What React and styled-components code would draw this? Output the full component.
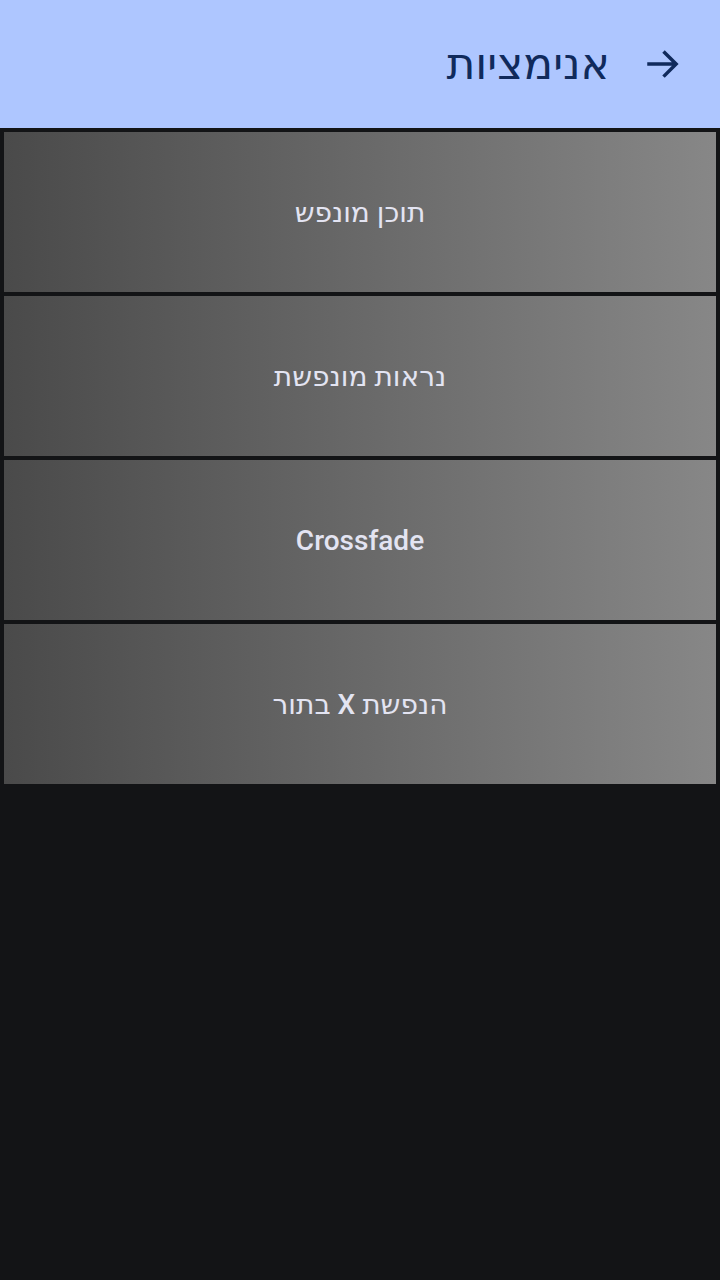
import React from "react";
import styled, { createGlobalStyle } from "styled-components";

const Global = createGlobalStyle`
  html, body { margin: 0; padding: 0; background: #131416; }
  body { font-family: Roboto, "Noto Sans", "DejaVu Sans", sans-serif; }
`;

const Page = styled.div`
  width: 720px;
  min-height: 1280px;
  background: #131416;
  direction: rtl;
`;

const Header = styled.header`
  height: 128px;
  background: #aec6ff;
  display: flex;
  align-items: center;
  padding: 0 36px 0 0;
  box-sizing: border-box;
  gap: 32px;
`;

const BackButton = styled.button`
  background: none;
  border: none;
  padding: 0;
  width: 42px;
  height: 42px;
  display: flex;
  align-items: center;
  justify-content: center;
  color: #102a5c;
  cursor: pointer;
`;

const Title = styled.h1`
  margin: 0;
  font-family: Roboto, "Noto Sans", "DejaVu Sans", sans-serif;
  font-weight: 400;
  font-size: 44px;
  color: #102a5c;
  line-height: 1;
`;

const List = styled.div`
  display: flex;
  flex-direction: column;
  gap: 4px;
  padding: 4px;
`;

const Card = styled.button`
  height: 160px;
  border: none;
  padding: 0;
  background: linear-gradient(to right, #4a4a4a, #878787);
  display: flex;
  align-items: center;
  justify-content: center;
  font-family: Roboto, "Noto Sans", "DejaVu Sans", sans-serif;
  font-size: 28px;
  font-weight: 500;
  color: #e3e4f2;
  direction: rtl;
  cursor: pointer;
`;

const items = ["תוכן מונפש", "נראות מונפשת", "Crossfade", "הנפשת X בתור"];

export default function App() {
  return (
    <Page>
      <Global />
      <Header>
        <BackButton aria-label="חזרה">
          <svg width="42" height="42" viewBox="0 0 24 24" fill="none" stroke="currentColor" strokeWidth="2" strokeLinecap="square">
            <path d="M4 12h15M13 5.5l6.5 6.5-6.5 6.5" />
          </svg>
        </BackButton>
        <Title>אנימציות</Title>
      </Header>
      <List>
        {items.map((label) => (
          <Card key={label}>{label}</Card>
        ))}
      </List>
    </Page>
  );
}
